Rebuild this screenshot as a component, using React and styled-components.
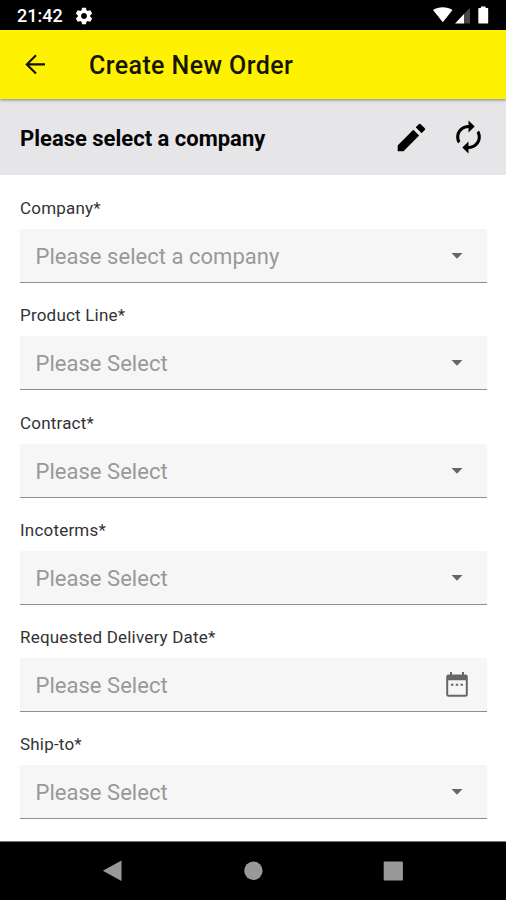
import React from 'react'
import styled, { createGlobalStyle } from 'styled-components'

const fields = [
    { label: "Company*", placeholder: "Please select a company", type: "select" },
    { label: "Product Line*", placeholder: "Please Select", type: "select" },
    { label: "Contract*", placeholder: "Please Select", type: "select" },
    { label: "Incoterms*", placeholder: "Please Select", type: "select" },
    { label: "Requested Delivery Date*", placeholder: "Please Select", type: "date" },
    { label: "Ship-to*", placeholder: "Please Select", type: "select" },
]

function GearIcon() {
    return (
        <svg width="20" height="20" viewBox="0 0 24 24" fill="#fff">
            <path d="M19.43 12.98c.04-.32.07-.64.07-.98s-.03-.66-.07-.98l2.11-1.65c.19-.15.24-.42.12-.64l-2-3.46c-.12-.22-.39-.3-.61-.22l-2.49 1c-.52-.4-1.08-.73-1.69-.98l-.38-2.65C14.46 2.18 14.25 2 14 2h-4c-.25 0-.46.18-.49.42l-.38 2.65c-.61.25-1.17.59-1.69.98l-2.49-1c-.23-.09-.49 0-.61.22l-2 3.46c-.13.22-.07.49.12.64l2.11 1.65c-.04.32-.07.65-.07.98s.03.66.07.98l-2.11 1.65c-.19.15-.24.42-.12.64l2 3.46c.12.22.39.3.61.22l2.49-1c.52.4 1.08.73 1.69.98l.38 2.65c.03.24.24.42.49.42h4c.25 0 .46-.18.49-.42l.38-2.65c.61-.25 1.17-.59 1.69-.98l2.49 1c.23.09.49 0 .61-.22l2-3.46c.12-.22.07-.49-.12-.64l-2.11-1.65zM12 15.5c-1.93 0-3.5-1.57-3.5-3.5s1.57-3.5 3.5-3.5 3.5 1.57 3.5 3.5-1.57 3.5-3.5 3.5z" />
        </svg>
    )
}

function SystemIcons() {
    return (
        <svg width="58" height="20" viewBox="0 0 58 20" fill="#fff">
            <path d="M1 4C6.500 0.2 15 0.2 20.500 4L10.800 16.200z" />
            <path d="M32 8v9.500h-9z" />
            <path d="M32 8l6-6v15.500h-6z" fill="#484848" />
            <path d="M46.300 2.800q0-.8.8-.8h1.800V.5h4.700V2h1.800q.8 0 .8.8v14q0 .8-.8.8h-8.300q-.8 0-.8-.8z" />
        </svg>
    )
}

function BackArrow() {
    return (
        <svg width="29" height="29" viewBox="0 0 29 29" fill="none" stroke="#111100" strokeWidth="2.100">
            <path d="M24 14.400H6.200M15 5.200l-9.200 9.200 9.200 9.200" />
        </svg>
    )
}

function PencilIcon() {
    return (
        <svg width="30" height="30" viewBox="0 0 30 30" fill="#000">
            <path d="M1.700 29.300v-5.500q0-.5.4-.9L17.300 7.700l5.800 5.800L7.800 28.900q-.4.4-.9.400z" />
            <path d="M19.700 5.300l3.100-3.100q1-1 2 0l4 4q.9.9 0 1.800l-3.200 3.200z" />
        </svg>
    )
}

function RenewIcon() {
    return (
        <svg width="37" height="36" viewBox="0 0 24 24" preserveAspectRatio="none" fill="#000">
            <path d="M12 6v3l4-4-4-4v3c-4.420 0-8 3.580-8 8 0 1.570.46 3.030 1.240 4.260L6.700 14.800c-.45-.83-.7-1.790-.7-2.800 0-3.310 2.690-6 6-6zm6.760 1.740L17.300 9.200c.44.84.7 1.790.7 2.800 0 3.310-2.690 6-6 6v-3l-4 4 4 4v-3c4.420 0 8-3.580 8-8 0-1.570-.46-3.030-1.240-4.260z" />
        </svg>
    )
}

function CaretIcon() {
    return (
        <svg width="12" height="7" viewBox="0 0 12 7" fill="#666">
            <path d="M.5 1h11L6 6.700z" />
        </svg>
    )
}

function CalendarIcon() {
    return (
        <svg width="22" height="25" viewBox="0 0 22 25" fill="#666">
            <path fillRule="evenodd" d="M4 0h2v2.500h10V0h2v2.500h1.500a2.300 2.300 0 0 1 2.300 2.300v17.700a2.300 2.300 0 0 1-2.300 2.300h-17A2.300 2.300 0 0 1 .2 22.500V4.800a2.300 2.300 0 0 1 2.300-2.300H4zM2.200 8.200v14.600h17.600V8.200z" />
            <path d="M5 11.700h2.400v2H5zM9.800 11.700h2.400v2H9.800zM14.600 11.700H17v2h-2.400z" />
        </svg>
    )
}

function App() {
    return (
        <Screen>
            <GlobalStyle />
            <StatusBar>
                <Clock>21:42</Clock>
                <GearIcon />
                <StatusRight>
                    <SystemIcons />
                </StatusRight>
            </StatusBar>

            <AppBar>
                <BackArrow />
                <Title>Create New Order</Title>
            </AppBar>

            <CompanyBar>
                <CompanyName>Please select a company</CompanyName>
                <PencilIcon />
                <RenewIcon />
            </CompanyBar>

            <Form>
                {fields.map(field => (
                    <Field key={field.label}>
                        <Label>{field.label}</Label>
                        <SelectBox>
                            <Placeholder>{field.placeholder}</Placeholder>
                            <IconSlot>
                                {field.type === "date" ? <CalendarIcon /> : <CaretIcon />}
                            </IconSlot>
                        </SelectBox>
                    </Field>
                ))}
            </Form>

            <NavBar>
                <svg width="20" height="22" viewBox="0 0 20 22" fill="#999">
                    <path d="M19.500.5v20.500L.8 10.800z" />
                </svg>
                <svg width="20" height="20" viewBox="0 0 20 20" fill="#999">
                    <circle cx="10.400" cy="9.800" r="9.200" />
                </svg>
                <svg width="20" height="20" viewBox="0 0 20 20" fill="#999">
                    <rect x=".7" y=".4" width="19.200" height="19.200" rx="1.200" />
                </svg>
            </NavBar>
        </Screen>
    )
}

const GlobalStyle = createGlobalStyle`
    body {
        margin: 0;
        background: #fff;
    }

    svg {
        display: block;
        flex: none;
    }
`

const Screen = styled.div`
    display: flex;
    flex-direction: column;
    width: 506px;
    height: 900px;
    overflow: hidden;
    background: #fff;
    font-family: Roboto, "Liberation Sans", sans-serif;
    white-space: nowrap;
`

const StatusBar = styled.header`
    display: flex;
    align-items: center;
    flex: none;
    height: 29.500px;
    padding: 2px 16px 0 17px;
    box-sizing: border-box;
    background: #000;
    color: #fff;
`

const Clock = styled.span`
    width: 57px;
    font-size: 18px;
    font-weight: 500;
`

const StatusRight = styled.div`
    margin-left: auto;
`

const AppBar = styled.div`
    display: flex;
    align-items: center;
    flex: none;
    position: relative;
    height: 69.500px;
    padding-left: 20.500px;
    background: #fff200;
    box-shadow: 0 1px 3px rgba(0, 0, 0, 0.45);
`

const Title = styled.h1`
    margin: 3px 0 0 39.500px;
    font-size: 25px;
    font-weight: 500;
    letter-spacing: 0.400px;
    color: #151500;
`

const CompanyBar = styled.div`
    display: flex;
    align-items: center;
    flex: none;
    gap: 24px;
    height: 76px;
    padding: 0 19px 0 20px;
    box-sizing: border-box;
    background: #e6e6e8;
`

const CompanyName = styled.h2`
    flex: 1;
    margin: 2px 0 0;
    font-size: 22px;
    font-weight: 700;
    color: #050505;
`

const Form = styled.main`
    flex: 1;
    padding: 19px 19px 0 20px;
`

const Field = styled.div`
    height: 107.300px;
`

const Label = styled.label`
    display: block;
    height: 35px;
    line-height: 28px;
    font-size: 17px;
    letter-spacing: 0.200px;
    color: #333;
`

const SelectBox = styled.div`
    display: flex;
    align-items: center;
    justify-content: space-between;
    height: 54px;
    padding: 0 10px 0 15.500px;
    box-sizing: border-box;
    background: #f6f6f6;
    border-bottom: 1px solid #8f8f8f;
`

const Placeholder = styled.span`
    padding-top: 2px;
    font-size: 22px;
    letter-spacing: 0.030px;
    color: #999;
`

const IconSlot = styled.span`
    display: flex;
    justify-content: center;
    width: 40px;
`

const NavBar = styled.nav`
    display: flex;
    align-items: center;
    justify-content: space-between;
    flex: none;
    height: 59px;
    padding: 0 103px 0 102px;
    box-sizing: border-box;
    border-top: 1px solid #777;
    background: #000;
`

export default App
